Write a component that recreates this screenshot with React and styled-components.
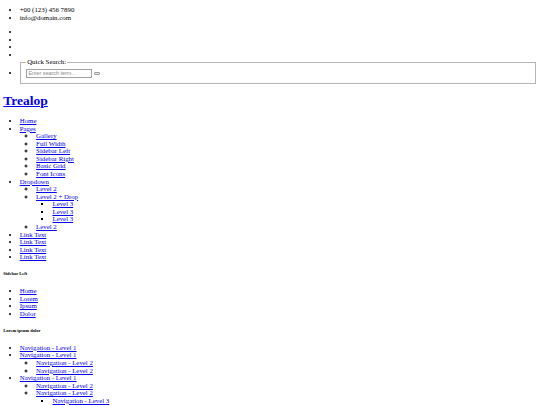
import React from "react";
import styled, { createGlobalStyle } from "styled-components";

const GlobalStyle = createGlobalStyle`
  html, body {
    background: #ffffff;
  }
  body {
    margin: 3.3px;
    font-family: "Liberation Serif", "Times New Roman", serif;
    font-size: 6.85px;
    line-height: 7.56px;
    color: #000000;
  }
  a {
    color: #0000ee;
  }
`;

const List = styled.ul`
  margin: ${props => (props.top ? "3.2px 0 6.6px" : "6.6px 0")};
  padding-left: 16.4px;
`;

const SubList = styled.ul`
  margin: 0;
  padding-left: 16.4px;
`;

const Logo = styled.h1`
  font-size: 13.5px;
  line-height: 15.4px;
  font-weight: bold;
  margin: 9.2px 0 8.6px;
`;

const WidgetTitle = styled.h6`
  font-size: 4.5px;
  line-height: 5.2px;
  font-weight: bold;
  margin: 10.6px 0;
`;

const SearchBox = styled.fieldset`
  margin: 0 0.8px;
  padding: 3px 4.9px 5.2px;
  border: 1px solid #b5b5b5;
  min-width: 0;

  legend {
    padding: 0 0.8px;
  }
`;

const SearchInput = styled.input`
  box-sizing: border-box;
  width: 66px;
  height: 8.6px;
  padding: 0 1px;
  margin: 0;
  border: 1px solid #a0a0a0;
  font-family: "Liberation Sans", Arial, sans-serif;
  font-size: 5.4px;
  vertical-align: middle;
  outline: none;

  &::placeholder {
    color: #8a8a8a;
  }
`;

const SearchButton = styled.button`
  box-sizing: border-box;
  width: 6.5px;
  height: 3px;
  padding: 0;
  margin: 0 0 0 1.6px;
  border: 1px solid #9a9a9a;
  border-radius: 1px;
  background: #efefef;
  vertical-align: middle;
`;

const mainNav = [
  { label: "Home" },
  {
    label: "Pages",
    children: [
      { label: "Gallery" },
      { label: "Full Width" },
      { label: "Sidebar Left" },
      { label: "Sidebar Right" },
      { label: "Basic Grid" },
      { label: "Font Icons" },
    ],
  },
  {
    label: "Dropdown",
    children: [
      { label: "Level 2" },
      {
        label: "Level 2 + Drop",
        children: [{ label: "Level 3" }, { label: "Level 3" }, { label: "Level 3" }],
      },
      { label: "Level 2" },
    ],
  },
  { label: "Link Text" },
  { label: "Link Text" },
  { label: "Link Text" },
  { label: "Link Text" },
];

const sideNav = [
  { label: "Navigation - Level 1" },
  {
    label: "Navigation - Level 1",
    children: [{ label: "Navigation - Level 2" }, { label: "Navigation - Level 2" }],
  },
  {
    label: "Navigation - Level 1",
    children: [
      { label: "Navigation - Level 2" },
      {
        label: "Navigation - Level 2",
        children: [{ label: "Navigation - Level 3" }],
      },
    ],
  },
];

const NavItems = ({ items }) =>
  items.map((item, i) => (
    <li key={i}>
      <a href="#">{item.label}</a>
      {item.children && (
        <SubList>
          <NavItems items={item.children} />
        </SubList>
      )}
    </li>
  ));

const App = () => {
  return (
    <>
      <GlobalStyle />
      <header>
        <List top>
          <li>+00 (123) 456 7890</li>
          <li>info@domain.com</li>
        </List>
        <List>
          <li></li>
          <li></li>
          <li></li>
          <li></li>
          <li>
            <form action="#" onSubmit={e => e.preventDefault()}>
              <SearchBox>
                <legend>Quick Search:</legend>
                <SearchInput type="text" placeholder="Enter search term…" />
                <SearchButton type="submit" />
              </SearchBox>
            </form>
          </li>
        </List>
      </header>
      <Logo>
        <a href="#">Trealop</a>
      </Logo>
      <nav>
        <List>
          <NavItems items={mainNav} />
        </List>
      </nav>
      <aside>
        <WidgetTitle>Sidebar Left</WidgetTitle>
        <List>
          <li><a href="#">Home</a></li>
          <li><a href="#">Lorem</a></li>
          <li><a href="#">Ipsum</a></li>
          <li><a href="#">Dolor</a></li>
        </List>
        <WidgetTitle>Lorem ipsum dolor</WidgetTitle>
        <List>
          <NavItems items={sideNav} />
        </List>
      </aside>
    </>
  );
};

export default App;
